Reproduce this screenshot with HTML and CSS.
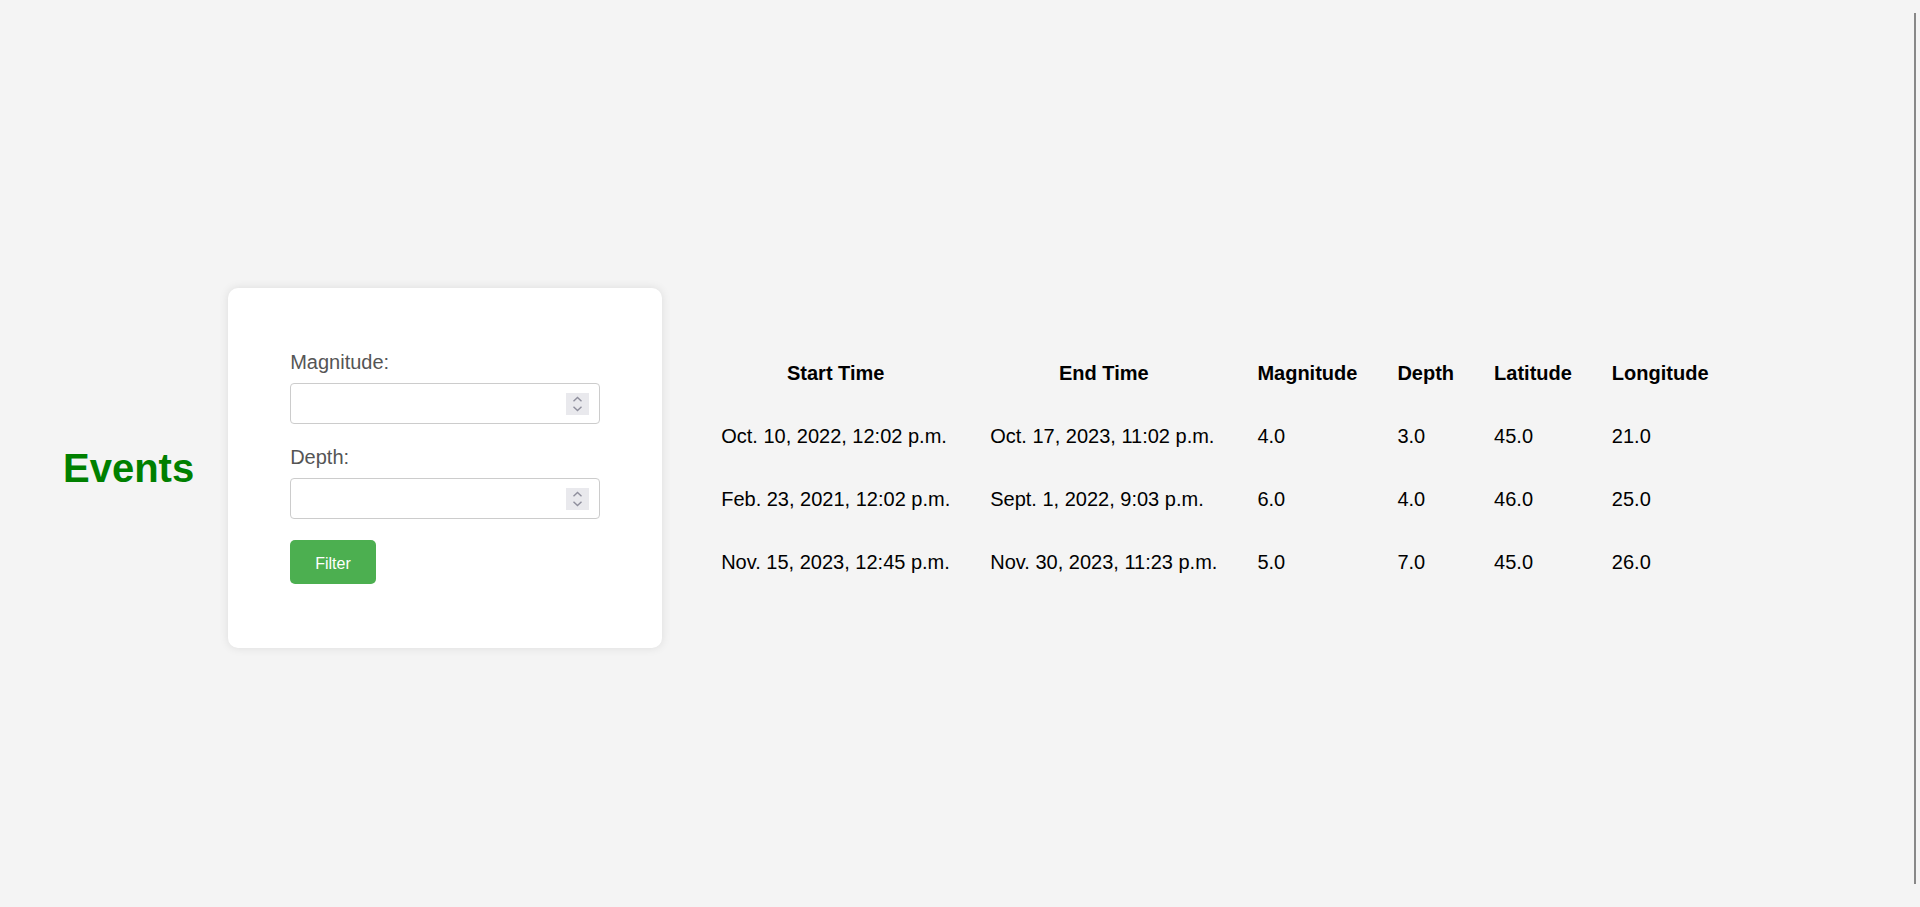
FILE: index.html
```
<!DOCTYPE html>
<html lang="en">
<head>
<meta charset="utf-8">
<title>Events</title>
<link rel="stylesheet" href="styles.css">
</head>
<body>
<div class="page">
  <h1 class="title">Events</h1>
  <div class="card">
    <form class="filter-form">
      <label class="field-label" for="magnitude">Magnitude:</label>
      <div class="input-wrap">
        <input class="field-input" type="number" id="magnitude" name="magnitude">
        <span class="spinner" aria-hidden="true">
          <svg width="23" height="22" viewBox="0 0 23 22"><path d="M7.5 8.2 L11.5 4.4 L15.5 8.2" fill="none" stroke="#8f8f9d" stroke-width="1.4"/><path d="M7.5 13.8 L11.5 17.6 L15.5 13.8" fill="none" stroke="#8f8f9d" stroke-width="1.4"/></svg>
        </span>
      </div>
      <label class="field-label" for="depth">Depth:</label>
      <div class="input-wrap input-wrap-last">
        <input class="field-input" type="number" id="depth" name="depth">
        <span class="spinner" aria-hidden="true">
          <svg width="23" height="22" viewBox="0 0 23 22"><path d="M7.5 8.2 L11.5 4.4 L15.5 8.2" fill="none" stroke="#8f8f9d" stroke-width="1.4"/><path d="M7.5 13.8 L11.5 17.6 L15.5 13.8" fill="none" stroke="#8f8f9d" stroke-width="1.4"/></svg>
        </span>
      </div>
      <button class="filter-btn" type="button">Filter</button>
    </form>
  </div>
  <table class="events-table">
    <thead>
      <tr>
        <th>Start Time</th>
        <th>End Time</th>
        <th>Magnitude</th>
        <th>Depth</th>
        <th>Latitude</th>
        <th>Longitude</th>
      </tr>
    </thead>
    <tbody>
      <tr>
        <td>Oct. 10, 2022, 12:02 p.m.</td>
        <td>Oct. 17, 2023, 11:02 p.m.</td>
        <td>4.0</td>
        <td>3.0</td>
        <td>45.0</td>
        <td>21.0</td>
      </tr>
      <tr>
        <td>Feb. 23, 2021, 12:02 p.m.</td>
        <td>Sept. 1, 2022, 9:03 p.m.</td>
        <td>6.0</td>
        <td>4.0</td>
        <td>46.0</td>
        <td>25.0</td>
      </tr>
      <tr>
        <td>Nov. 15, 2023, 12:45 p.m.</td>
        <td>Nov. 30, 2023, 11:23 p.m.</td>
        <td>5.0</td>
        <td>7.0</td>
        <td>45.0</td>
        <td>26.0</td>
      </tr>
    </tbody>
  </table>
</div>
<div class="scroll-line"></div>
</body>
</html>
```
FILE: styles.css
```
html, body {
  margin: 0;
  padding: 0;
}

body {
  font-family: "Liberation Sans", Arial, sans-serif;
  font-size: 20px;
  background: #f4f4f4;
  color: #000;
}

.page {
  display: flex;
  align-items: center;
  min-height: 100vh;
  box-sizing: border-box;
  padding: 29px 0 0 63px;
}

.title {
  font-size: 40px;
  font-weight: bold;
  color: #008000;
  margin: 0 34px 0 0;
  line-height: 46px;
}

.card {
  background: #fff;
  border-radius: 10px;
  padding: 63px 62px 64px;
  width: 310px;
  box-shadow: 0 0 10px rgba(0, 0, 0, 0.1);
  margin-right: 39px;
}

.filter-form {
  margin: 0;
}

.field-label {
  display: block;
  line-height: 23px;
  margin-bottom: 9px;
  color: #555;
}

.input-wrap {
  position: relative;
  width: 310px;
  height: 41px;
  margin-bottom: 22px;
}

.input-wrap-last {
  margin-bottom: 21px;
}

.field-input {
  display: block;
  width: 310px;
  height: 41px;
  box-sizing: border-box;
  border: 1px solid #ccc;
  border-radius: 4px;
  margin: 0;
  padding: 0 40px 0 8px;
  font-family: "Liberation Sans", Arial, sans-serif;
  font-size: 16px;
  background: #fff;
  -moz-appearance: textfield;
}

.field-input::-webkit-inner-spin-button,
.field-input::-webkit-outer-spin-button {
  -webkit-appearance: none;
  margin: 0;
}

.spinner {
  position: absolute;
  top: 10px;
  right: 11px;
  width: 23px;
  height: 22px;
  background: #e9e9ed;
  pointer-events: none;
}

.spinner svg {
  display: block;
}

.filter-btn {
  display: block;
  height: 44px;
  padding: 4px 25px 0;
  background: #4caf50;
  color: #fff;
  border: none;
  border-radius: 5px;
  font-family: "Liberation Sans", Arial, sans-serif;
  font-size: 16px;
  cursor: pointer;
}

.events-table {
  border-collapse: collapse;
}

.events-table th,
.events-table td {
  padding: 20px;
  line-height: 23px;
  white-space: nowrap;
}

.events-table th {
  text-align: center;
  font-weight: bold;
}

.events-table td {
  text-align: left;
}

.scroll-line {
  position: fixed;
  top: 13px;
  left: 1914px;
  width: 2px;
  height: 871px;
  background: #888;
}
```
